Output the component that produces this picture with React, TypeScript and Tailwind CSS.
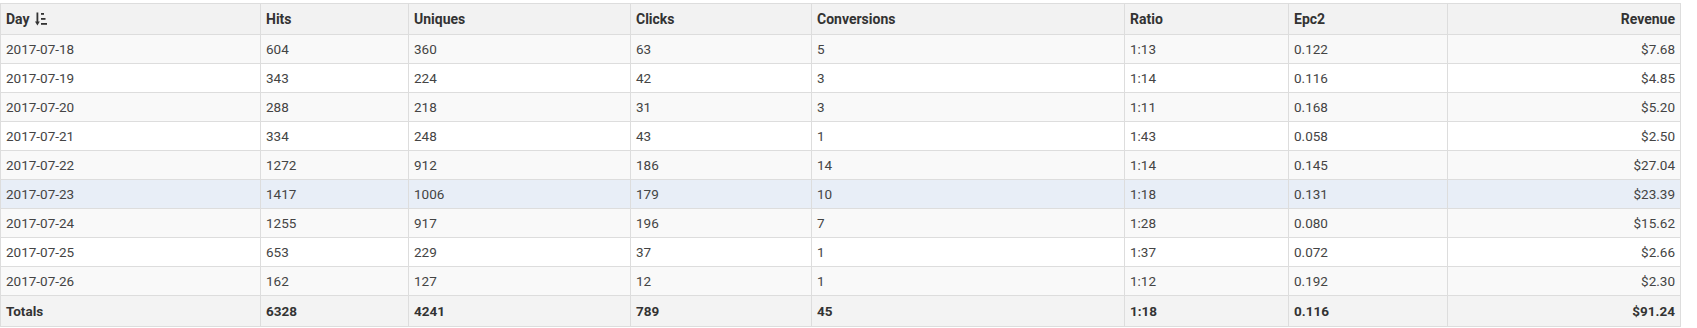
const rows = [
  ["2017-07-18", "604", "360", "63", "5", "1:13", "0.122", "$7.68"],
  ["2017-07-19", "343", "224", "42", "3", "1:14", "0.116", "$4.85"],
  ["2017-07-20", "288", "218", "31", "3", "1:11", "0.168", "$5.20"],
  ["2017-07-21", "334", "248", "43", "1", "1:43", "0.058", "$2.50"],
  ["2017-07-22", "1272", "912", "186", "14", "1:14", "0.145", "$27.04"],
  ["2017-07-23", "1417", "1006", "179", "10", "1:18", "0.131", "$23.39"],
  ["2017-07-24", "1255", "917", "196", "7", "1:28", "0.080", "$15.62"],
  ["2017-07-25", "653", "229", "37", "1", "1:37", "0.072", "$2.66"],
  ["2017-07-26", "162", "127", "12", "1", "1:12", "0.192", "$2.30"],
];

const totals = ["Totals", "6328", "4241", "789", "45", "1:18", "0.116", "$91.24"];
const headers = ["Day", "Hits", "Uniques", "Clicks", "Conversions", "Ratio", "Epc2", "Revenue"];
const widths = [260, 148, 222, 181, 313, 164, 159, 233];

function SortIcon() {
  return (
    <svg width="12" height="14" viewBox="0 0 12 14" className="ml-[5px] inline-block align-[-2px]" fill="#333">
      <rect x="1.5" y="0.5" width="1.8" height="10" />
      <path d="M0 9.5 L4.8 9.5 L2.4 13.5 Z" />
      <rect x="6" y="1" width="3" height="1.8" />
      <rect x="6" y="6" width="4.5" height="1.8" />
      <rect x="6" y="11" width="6" height="1.8" />
    </svg>
  );
}

export default function App() {
  return (
    <div className="min-h-screen bg-white pt-[3px] font-['Roboto','Liberation_Sans',sans-serif] text-[13.5px]">
      <table className="table-fixed border-collapse border border-[#dddddd]" style={{ width: 1681 }}>
        <colgroup>
          {widths.map((w, i) => (
            <col key={i} style={{ width: w }} />
          ))}
        </colgroup>
        <thead>
          <tr className="h-[31px] bg-[#f2f2f2]">
            {headers.map((h, i) => (
              <th
                key={h}
                className={[
                  "border border-[#dddddd] px-[5px] pt-px text-[14px] font-bold text-[#333333]",
                  i === 7 ? "text-right" : "text-left",
                ].join(" ")}
              >
                {h}
                {i === 0 ? <SortIcon /> : null}
              </th>
            ))}
          </tr>
        </thead>
        <tbody>
          {rows.map((r, ri) => (
            <tr
              key={r[0]}
              className={[
                "h-[29px]",
                ri === 5 ? "bg-[#e8eef7]" : ri % 2 === 0 ? "bg-[#f9f9f9]" : "bg-white",
              ].join(" ")}
            >
              {r.map((c, ci) => (
                <td
                  key={ci}
                  className={[
                    "border border-[#dddddd] px-[5px] pt-px text-[#444444]",
                    ci === 7 ? "text-right" : "text-left",
                  ].join(" ")}
                >
                  {c}
                </td>
              ))}
            </tr>
          ))}
          <tr className="h-[31px] bg-[#f3f3f3]">
            {totals.map((c, ci) => (
              <td
                key={ci}
                className={[
                  "border border-[#dddddd] px-[5px] pt-px font-bold text-[#333333]",
                  ci === 7 ? "text-right" : "text-left",
                ].join(" ")}
              >
                {c}
              </td>
            ))}
          </tr>
        </tbody>
      </table>
    </div>
  );
}
